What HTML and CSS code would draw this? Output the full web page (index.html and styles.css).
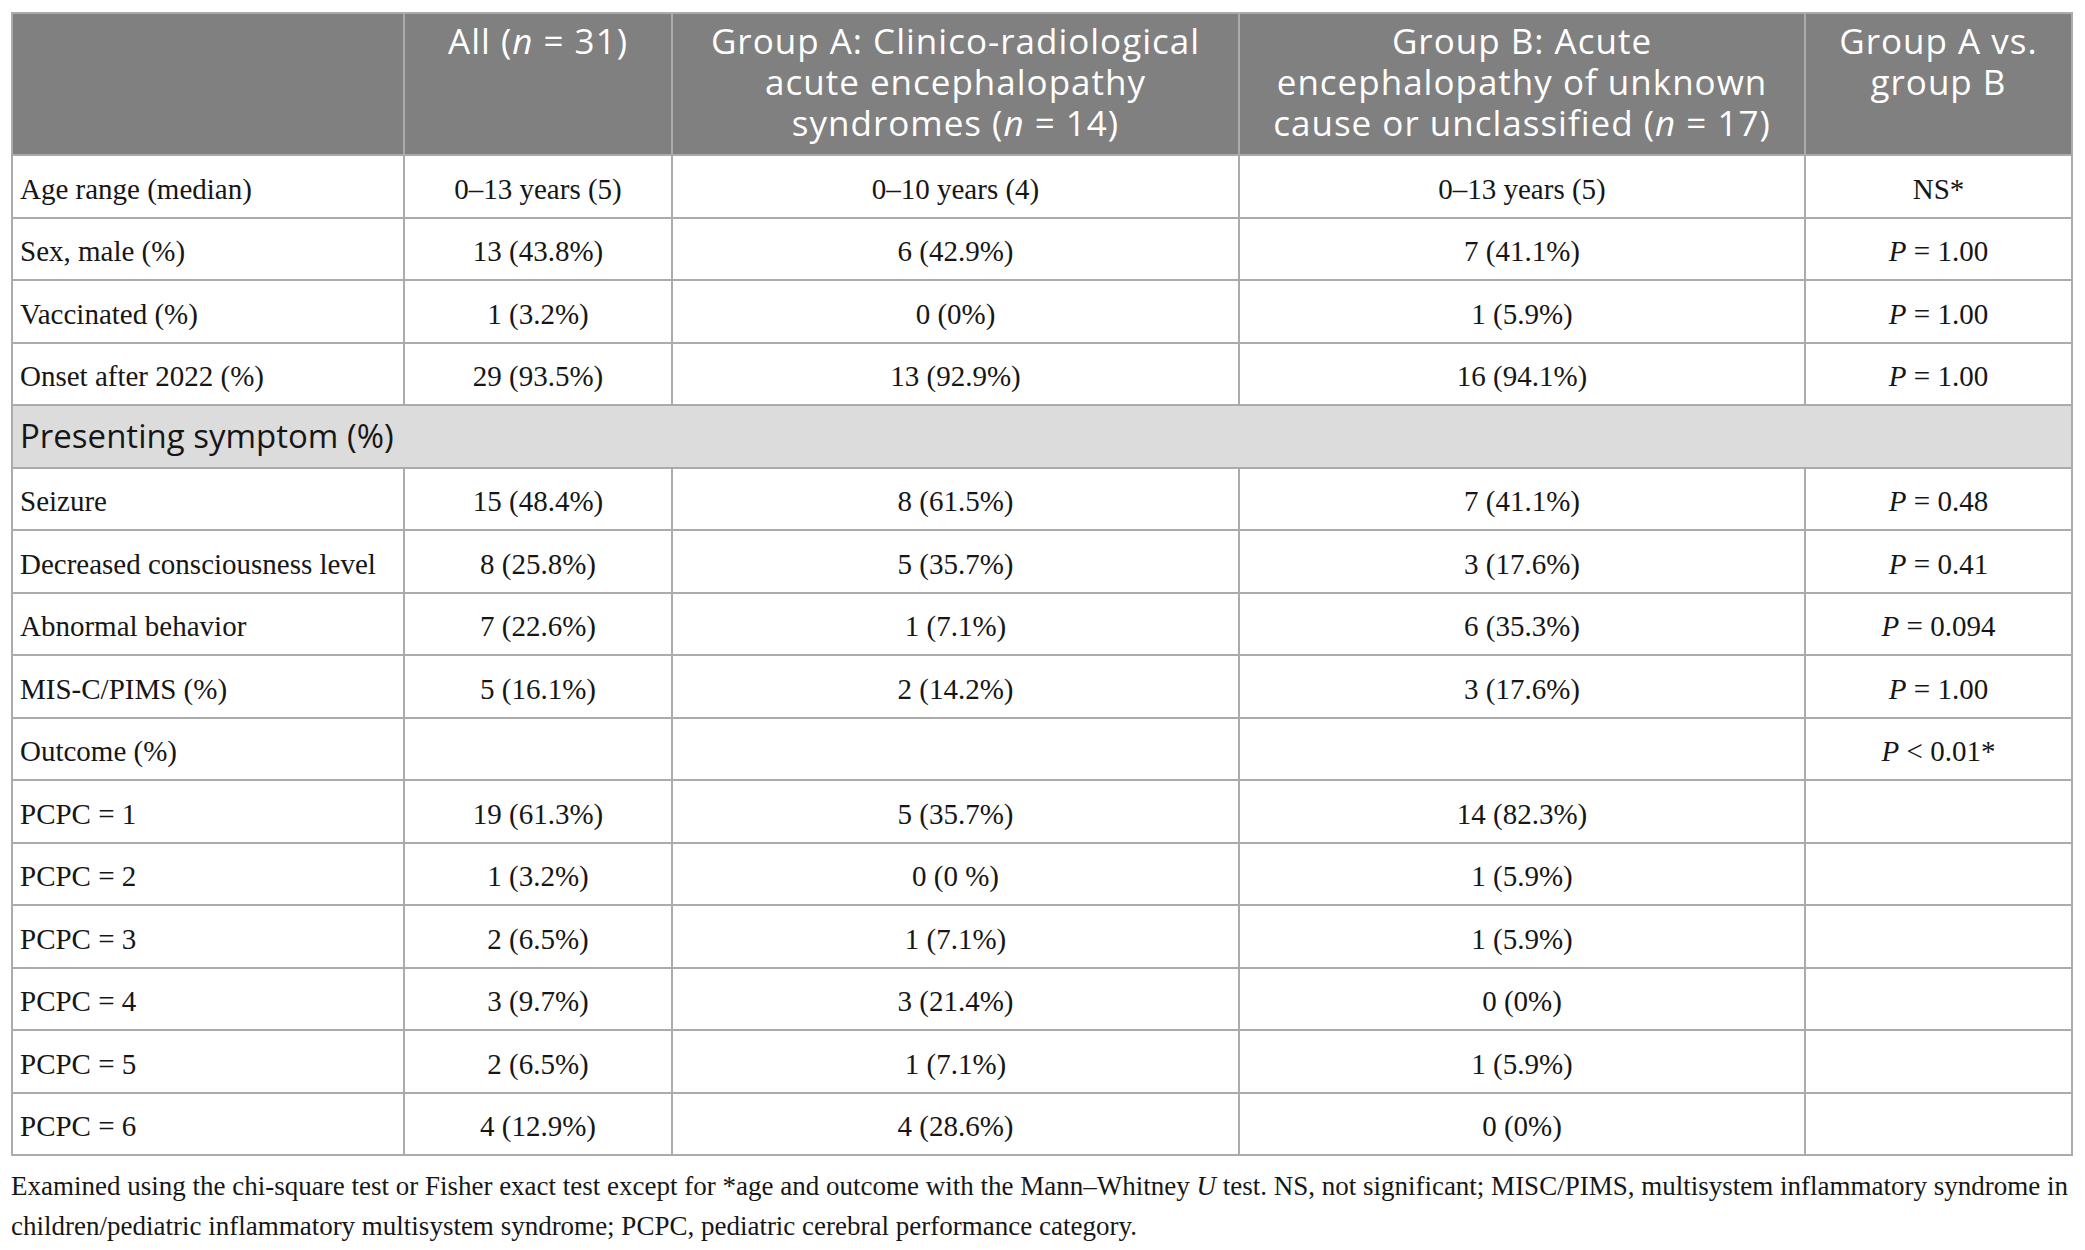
FILE: index.html
```html
<!DOCTYPE html>
<html lang="en">
<head>
<meta charset="utf-8">
<title>Table</title>
<link rel="stylesheet" href="styles.css">
</head>
<body>
<div class="page">
<table class="data">
  <colgroup>
    <col class="c1"><col class="c2"><col class="c3"><col class="c4"><col class="c5">
  </colgroup>
  <thead>
    <tr>
      <th></th>
      <th>All (<i>n</i> = 31)</th>
      <th>Group A: Clinico-radiological acute encephalopathy syndromes (<i>n</i> = 14)</th>
      <th>Group B: Acute encephalopathy of unknown cause or unclassified (<i>n</i> = 17)</th>
      <th>Group A vs. group B</th>
    </tr>
  </thead>
  <tbody>
    <tr><td>Age range (median)</td><td>0–13 years (5)</td><td>0–10 years (4)</td><td>0–13 years (5)</td><td>NS*</td></tr>
    <tr><td>Sex, male (%)</td><td>13 (43.8%)</td><td>6 (42.9%)</td><td>7 (41.1%)</td><td><i>P</i> = 1.00</td></tr>
    <tr><td>Vaccinated (%)</td><td>1 (3.2%)</td><td>0 (0%)</td><td>1 (5.9%)</td><td><i>P</i> = 1.00</td></tr>
    <tr><td>Onset after 2022 (%)</td><td>29 (93.5%)</td><td>13 (92.9%)</td><td>16 (94.1%)</td><td><i>P</i> = 1.00</td></tr>
    <tr class="section"><td colspan="5">Presenting symptom (%)</td></tr>
    <tr><td>Seizure</td><td>15 (48.4%)</td><td>8 (61.5%)</td><td>7 (41.1%)</td><td><i>P</i> = 0.48</td></tr>
    <tr><td>Decreased consciousness level</td><td>8 (25.8%)</td><td>5 (35.7%)</td><td>3 (17.6%)</td><td><i>P</i> = 0.41</td></tr>
    <tr><td>Abnormal behavior</td><td>7 (22.6%)</td><td>1 (7.1%)</td><td>6 (35.3%)</td><td><i>P</i> = 0.094</td></tr>
    <tr><td>MIS-C/PIMS (%)</td><td>5 (16.1%)</td><td>2 (14.2%)</td><td>3 (17.6%)</td><td><i>P</i> = 1.00</td></tr>
    <tr><td>Outcome (%)</td><td></td><td></td><td></td><td><i>P</i> &lt; 0.01*</td></tr>
    <tr><td>PCPC = 1</td><td>19 (61.3%)</td><td>5 (35.7%)</td><td>14 (82.3%)</td><td></td></tr>
    <tr><td>PCPC = 2</td><td>1 (3.2%)</td><td>0 (0 %)</td><td>1 (5.9%)</td><td></td></tr>
    <tr><td>PCPC = 3</td><td>2 (6.5%)</td><td>1 (7.1%)</td><td>1 (5.9%)</td><td></td></tr>
    <tr><td>PCPC = 4</td><td>3 (9.7%)</td><td>3 (21.4%)</td><td>0 (0%)</td><td></td></tr>
    <tr><td>PCPC = 5</td><td>2 (6.5%)</td><td>1 (7.1%)</td><td>1 (5.9%)</td><td></td></tr>
    <tr><td>PCPC = 6</td><td>4 (12.9%)</td><td>4 (28.6%)</td><td>0 (0%)</td><td></td></tr>
  </tbody>
</table>
<p class="note">Examined using the chi-square test or Fisher exact test except for *age and outcome with the Mann–Whitney <i>U</i> test. NS, not significant; MISC/PIMS, multisystem inflammatory syndrome in<br>children/pediatric inflammatory multisystem syndrome; PCPC, pediatric cerebral performance category.</p>
</div>
</body>
</html>
```

FILE: styles.css
```css
html, body {
  margin: 0;
  padding: 0;
  background: #ffffff;
}
.page {
  padding: 12px 14px 0 11px;
}
.data {
  border-collapse: collapse;
  width: 2060px;
  table-layout: fixed;
  font-family: "Liberation Serif", "Times New Roman", serif;
  font-size: 29px;
  color: #161616;
}
.c1 { width: 392px; }
.c2 { width: 268px; }
.c3 { width: 567px; }
.c4 { width: 566px; }
.c5 { width: 267px; }
.data th, .data td {
  border: 2px solid #ababab;
}
.data th {
  background: #808080;
  color: #ffffff;
  font-family: "Open Sans", "Noto Sans", sans-serif;
  font-weight: 400;
  font-size: 35px;
  letter-spacing: 1px;
  line-height: 41px;
  padding: 6px 12px 11px;
  text-align: center;
  vertical-align: top;
}
.data td {
  height: 55.5px;
  padding: 5px 8px 0 8px;
  text-align: center;
  vertical-align: middle;
  line-height: 30px;
}
.data td:first-child {
  text-align: left;
  padding-left: 7px;
}
.data .section td {
  height: 60.5px;
  padding: 0 8px 0 7px;
  background: #dcdcdc;
  font-family: "Open Sans", "Noto Sans", sans-serif;
  font-size: 33px;
  text-align: left;
}
.note {
  margin: 10px 0 0;
  font-family: "Liberation Serif", "Times New Roman", serif;
  font-size: 27px;
  line-height: 40px;
  color: #161616;
  white-space: nowrap;
}
```
